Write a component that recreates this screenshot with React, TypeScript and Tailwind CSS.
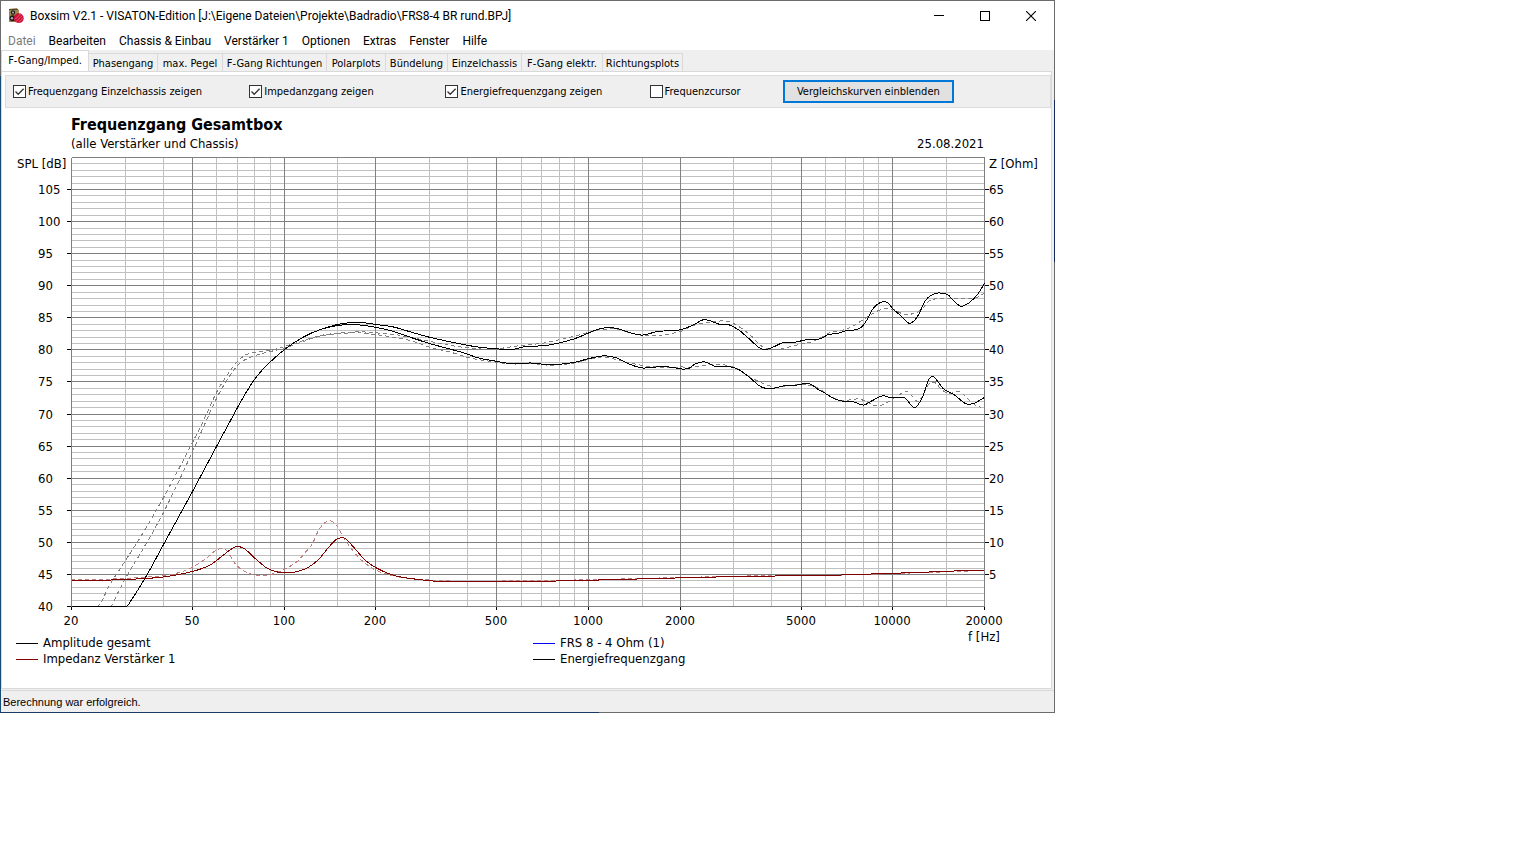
import { useState } from "react";

type Point = [number, number];

const TABS = [
  { label: "F-Gang/Imped.", width: "w-[88px]" },
  { label: "Phasengang", width: "w-[69px]" },
  { label: "max. Pegel", width: "w-[65px]" },
  { label: "F-Gang Richtungen", width: "w-[104px]" },
  { label: "Polarplots", width: "w-[59px]" },
  { label: "Bündelung", width: "w-[62px]" },
  { label: "Einzelchassis", width: "w-[74px]" },
  { label: "F-Gang elektr.", width: "w-[81px]" },
  { label: "Richtungsplots", width: "w-[80px]" },
];

const MENU = ["Datei", "Bearbeiten", "Chassis & Einbau", "Verstärker 1", "Optionen", "Extras", "Fenster", "Hilfe"];

// Plot area in drawing units
const LEFT = 71;
const RIGHT = 984;
const TOP = 157;
const BOTTOM = 606;

const xOf = (hz: number) => Math.round(LEFT + (Math.log10(hz / 20) / 3) * (RIGHT - LEFT));
const yOf = (db: number) => Math.ceil(BOTTOM - 0.5 - ((db - 40) / 70) * (BOTTOM - TOP));

const MINOR_HZ = [
  30, 40, 60, 70, 80, 90, 150, 300, 400, 600, 700, 800, 900, 1500, 3000, 4000, 6000, 7000, 8000, 9000, 15000,
];
const MAJOR_HZ = [20, 50, 100, 200, 500, 1000, 2000, 5000, 10000, 20000];
const ROWS = Array.from({ length: 71 }, (_, i) => 40 + i);
const MAJOR_DB = Array.from({ length: 14 }, (_, i) => 40 + i * 5);

const RISE: Point[] = [
  [71, 606], [126, 606], [128, 604], [145, 577], [163, 544], [192, 491], [216, 446], [237, 407], [245, 393],
  [254, 379], [265, 366], [284, 349], [302, 337], [320, 329],
];

const TOTAL: Point[] = [
  ...RISE,
  [337, 324], [347, 322.5], [365, 322.5], [375, 324], [393, 326.5], [412, 332], [430, 337], [453, 342], [477, 346.5],
  [496, 348.3], [512, 349], [525, 346], [542, 345.3], [555, 343.3], [574, 338.3], [588, 332.5], [600, 328],
  [608, 327.3], [617, 328], [630, 332.3], [642, 334.6], [657, 331], [680, 329.3], [693, 324.3], [702, 319.5],
  [709, 320], [718, 323.5], [729, 324.5], [738, 329.3], [748, 337.7], [760, 348], [768, 348.5], [783, 342],
  [793, 342], [807, 339], [820, 338.3], [828, 334], [837, 333], [847, 329.9], [855, 329.3], [861, 326.5],
  [867, 318.5], [873, 307.5], [880, 302], [887, 302.2], [893, 309], [900, 315], [907, 322], [911, 322.3],
  [917, 316], [925, 300], [932, 294], [938, 292.4], [947, 294], [953, 300], [959, 305.3], [963, 305.3],
  [969, 302], [977, 294], [984, 283],
];

const ENERGY: Point[] = [
  ...RISE,
  [337, 325], [347, 324.2], [357, 324.2], [375, 326.7], [393, 331], [412, 337.5], [430, 343.3], [463, 352.3],
  [478, 357.5], [496, 360.8], [512, 363.2], [530, 362.5], [550, 364.3], [574, 361.8], [588, 358.2], [603, 355.4],
  [615, 357], [630, 364], [642, 367.5], [660, 366.2], [672, 366.8], [680, 368.4], [688, 368], [695, 363.3],
  [704, 361.3], [715, 366], [730, 366.4], [738, 369], [748, 376], [760, 386], [770, 388.3], [783, 385.4],
  [793, 385.2], [802, 383.5], [810, 383.7], [817, 388.5], [823, 391.7], [832, 397.3], [840, 400.3], [852, 401],
  [863, 404.6], [872, 400], [882, 395.3], [890, 397], [904, 397.4], [914, 407], [922, 396.7], [928, 379.5],
  [933, 376.2], [943, 388.3], [953, 393.7], [965, 403], [973, 403], [984, 397],
];

const COMPARE_TOTAL: Point[] = [
  [96, 606], [110, 583], [125, 560], [144, 530], [163, 497], [192, 442], [204, 418], [216, 392], [227, 374],
  [237, 361], [246, 354], [257, 351.5], [273, 349], [284, 346], [297, 342], [320, 335], [340, 332.5], [358, 331.3],
  [375, 332.3], [394, 334], [412, 337.3], [430, 341], [450, 345], [477, 348.3], [496, 348.3], [513, 346],
  [525, 344.5], [542, 342.7], [563, 338.3], [588, 332], [600, 329.2], [617, 328.7], [630, 332.5], [643, 335],
  [657, 335], [680, 331], [693, 325], [705, 322.5], [723, 320.4], [733, 323], [748, 333], [763, 346.7],
  [778, 348.8], [797, 344.3], [810, 341.7], [820, 337.5], [830, 332], [847, 328.3], [863, 319], [877, 310.5],
  [884, 308.5], [893, 309], [900, 312.5], [908, 314], [920, 310], [928, 301], [937, 298], [950, 297.7],
  [963, 298], [977, 296.7], [984, 292.5],
];

const COMPARE_ENERGY: Point[] = [
  [110, 606], [117, 593], [126, 576], [144, 546], [163, 512], [180, 477], [192, 451], [216, 398], [227, 379],
  [237, 365], [247, 358], [262, 353], [284, 347.5], [300, 342], [320, 335.5], [340, 333], [358, 332.4], [375, 334],
  [393, 336.7], [412, 340.7], [430, 347], [453, 352.5], [470, 357.7], [496, 361.7], [512, 363.5], [530, 363],
  [550, 364.7], [574, 362.5], [588, 359], [603, 356.4], [617, 359.5], [630, 362.5], [642, 365], [660, 366.7],
  [680, 366.5], [693, 366.5], [703, 364.8], [723, 364.3], [738, 369], [748, 376], [763, 383], [773, 386.5],
  [783, 386], [801, 384], [815, 386.5], [832, 397], [843, 400], [857, 398.5], [866, 401], [873, 405],
  [883, 404], [893, 398], [901, 393], [907, 391.3], [913, 397], [917, 401], [922, 396], [928, 384],
  [934, 382], [941, 389], [948, 393], [959, 391.3], [967, 398], [974, 404], [981, 407],
];

const IMPEDANCE: Point[] = [
  [71, 580.3], [95, 580], [124, 579], [145, 578], [163, 576.5], [180, 573.7], [197, 569.5], [210, 564.3],
  [223, 554.5], [233, 547.2], [239, 546.2], [245, 549], [255, 558.3], [267, 568], [277, 571.5], [286, 572.3],
  [297, 571], [308, 566.7], [318, 559], [328, 547], [335, 539.5], [340, 537.3], [345, 538.3], [353, 546.5],
  [365, 560], [377, 568], [388, 573], [400, 576.5], [430, 580.3], [447, 581.3], [527, 581], [583, 579.9],
  [667, 577.7], [753, 575.7], [810, 575.2], [848, 574.3], [885, 573], [916, 572], [941, 571], [967, 570],
  [984, 569.5],
];

const COMPARE_IMPEDANCE: Point[] = [
  [71, 579.5], [124, 578], [163, 575], [180, 571.7], [193, 566], [207, 557], [215, 550], [222, 548.3],
  [227, 551], [233, 561], [240, 568.3], [248, 572.7], [258, 574.7], [270, 574], [283, 569.3], [297, 560.7],
  [305, 551.7], [312, 543], [318, 530], [325, 521.8], [330, 520.3], [337, 526], [343, 537], [353, 551],
  [363, 561.5], [375, 569.5], [388, 574], [400, 576.8], [430, 579.6], [450, 580.5], [527, 580.3], [583, 579.3],
  [667, 577.3], [753, 575.4], [848, 574.4], [916, 572.3], [967, 570.6], [984, 570],
];

// Smooth cubic path through all points, never dropping below the axis
function curve(points: Point[]) {
  let d = `M${points[0][0]},${points[0][1]}`;
  for (let i = 0; i < points.length - 1; i++) {
    const p0 = points[Math.max(0, i - 1)];
    const p1 = points[i];
    const p2 = points[i + 1];
    const p3 = points[Math.min(points.length - 1, i + 2)];
    const h = (p2[0] - p1[0]) / 3;
    const m1 = (p2[1] - p0[1]) / (p2[0] - p0[0] || 1);
    const m2 = (p3[1] - p1[1]) / (p3[0] - p1[0] || 1);
    const y1 = i === 0 ? p1[1] : p1[1] + m1 * h;
    const y2 = p2[1] - m2 * h;
    d += `C${(p1[0] + h).toFixed(2)},${Math.min(y1, BOTTOM).toFixed(2)} ${(p2[0] - h).toFixed(2)},${Math.min(y2, BOTTOM).toFixed(2)} ${p2[0]},${p2[1]}`;
  }
  return d;
}

function Chart() {
  return (
    <svg
      viewBox="2 152 1049 482"
      className="block w-full overflow-visible"
      role="img"
      aria-label="Frequenzgang Gesamtbox"
      fontSize="13"
    >
      <g shapeRendering="crispEdges" strokeWidth="1" fill="none">
        <g stroke="#c0c0c0" transform="translate(0.5 0.5)">
          {ROWS.filter((db) => db % 5).map((db) => (
            <line key={db} x1={LEFT} x2={RIGHT} y1={yOf(db)} y2={yOf(db)} />
          ))}
          {MINOR_HZ.map((hz) => (
            <line key={hz} x1={xOf(hz)} x2={xOf(hz)} y1={TOP} y2={BOTTOM} />
          ))}
        </g>
        <g stroke="#808080" transform="translate(0.5 0.5)">
          {MAJOR_DB.map((db) => (
            <line key={db} x1={LEFT} x2={RIGHT} y1={yOf(db)} y2={yOf(db)} />
          ))}
          {MAJOR_HZ.map((hz) => (
            <line key={hz} x1={xOf(hz)} x2={xOf(hz)} y1={TOP} y2={BOTTOM} />
          ))}
          <line x1={LEFT} x2={RIGHT} y1={TOP} y2={TOP} />
        </g>
        <g stroke="#000" transform="translate(0.5 0.5)">
          {MAJOR_DB.map((db) => (
            <line key={db} x1={LEFT - 5} x2={LEFT - 1} y1={yOf(db)} y2={yOf(db)} />
          ))}
          {MAJOR_DB.slice(1).map((db) => (
            <line key={db} x1={RIGHT} x2={RIGHT + 4} y1={yOf(db)} y2={yOf(db)} />
          ))}
          {MAJOR_HZ.map((hz) => (
            <line key={hz} x1={xOf(hz)} x2={xOf(hz)} y1={BOTTOM} y2={BOTTOM + 3} />
          ))}
        </g>
        <g transform="translate(0.5 0.5)">
          <g strokeDasharray="4 3">
            <path d={curve(COMPARE_TOTAL)} stroke="#808080" />
            <path d={curve(COMPARE_ENERGY)} stroke="#808080" />
            <path d={curve(COMPARE_IMPEDANCE)} stroke="#c08080" />
          </g>
          <path d={curve(TOTAL)} stroke="#000" />
          <path d={curve(ENERGY)} stroke="#000" />
          <path d={curve(IMPEDANCE)} stroke="#800000" />
        </g>
      </g>
      <g fill="#000">
        <text x="17" y="168">SPL [dB]</text>
        <text x="989" y="168">Z [Ohm]</text>
        {MAJOR_DB.map((db) => (
          <text key={db} x="38" y={yOf(db) + 5}>{db}</text>
        ))}
        {MAJOR_DB.slice(1).map((db) => (
          <text key={db} x="989" y={yOf(db) + 5}>{db - 40}</text>
        ))}
        {MAJOR_HZ.map((hz) => (
          <text key={hz} x={xOf(hz)} y="625" textAnchor="middle">{hz}</text>
        ))}
        <text x="968" y="641">f [Hz]</text>
      </g>
    </svg>
  );
}

function Check({ label, initial }: { label: string; initial: boolean }) {
  const [on, setOn] = useState(initial);
  return (
    <label className="flex items-center gap-[2px] whitespace-nowrap">
      <span className="relative block size-[13px] shrink-0">
        <input
          type="checkbox"
          checked={on}
          onChange={() => setOn(!on)}
          className="block size-[13px] appearance-none border border-[#333] bg-white"
        />
        {on && (
          <svg viewBox="0 0 13 13" className="pointer-events-none absolute inset-0 size-[13px]" aria-hidden="true">
            <path d="M2.5 6.5 5.2 9.3 10.6 3.8" fill="none" stroke="#333" strokeWidth="1.3" />
          </svg>
        )}
      </span>
      <span className="pt-[2px]">{label}</span>
    </label>
  );
}

function AppIcon() {
  return (
    <svg viewBox="0 0 16 16" className="size-4 shrink-0" aria-hidden="true">
      <path d="M1 1 9 0.5 11 2V13L9.5 14H1Z" fill="#a98d58" />
      <path d="M1 1 9 0.5 10 2H1Z" fill="#5a4526" />
      <rect x="1" y="2" width="8.5" height="12" fill="#a08650" />
      <circle cx="5" cy="4.5" r="2.2" fill="#1c1c1c" />
      <circle cx="5" cy="4.5" r="0.9" fill="#c5c5c5" />
      <circle cx="4.6" cy="10.3" r="3" fill="#1c1c1c" />
      <circle cx="4" cy="10.3" r="1.2" fill="#aaa" />
      <circle cx="10.8" cy="10.2" r="4.9" fill="#d01038" />
      <path d="M7 11.5 12.5 6M8 13.6 14.6 7.4M10.3 14.6 15.4 9.8" stroke="#f08a9c" strokeWidth="0.6" />
    </svg>
  );
}

function LegendItem({ swatch, label }: { swatch: string; label: string }) {
  return (
    <li className="flex h-4 items-center gap-[5px]">
      <span className={`h-px w-[22px] ${swatch}`} />
      {label}
    </li>
  );
}

export default function App() {
  const [tab, setTab] = useState(0);
  return (
    <main
      className="w-full max-w-[1055px] bg-[#6b6b6b] p-px text-black [background-image:linear-gradient(#1a3c64,#1a3c64),linear-gradient(#1a4b73,#1a4b73),linear-gradient(#142a5c,#142a5c)] [background-position:0_100%,0_100%,100%_100px] [background-repeat:no-repeat] [background-size:599px_1px,1px_calc(100%-76px),1px_162px] font-['DejaVu_Sans_Condensed','DejaVu_Sans',sans-serif]"
    >
      <div className="bg-[#efefef] text-[11px]">
        <header className="flex h-[30px] items-center bg-white pb-px pl-[7px] font-['Roboto',sans-serif] text-xs">
          <AppIcon />
          <h1 className="ml-[6px] flex-1 whitespace-nowrap">
            Boxsim V2.1 - VISATON-Edition [J:\Eigene Dateien\Projekte\Badradio\FRS8-4 BR rund.BPJ]
          </h1>
          <button aria-label="Minimieren" className="flex h-full w-[46px] items-center justify-center">
            <span className="h-px w-[10px] bg-black" />
          </button>
          <button aria-label="Maximieren" className="flex h-full w-[46px] items-center justify-center">
            <span className="size-[10px] border border-black" />
          </button>
          <button aria-label="Schließen" className="flex h-full w-[46px] items-center justify-center">
            <svg viewBox="0 0 10 10" className="size-[10px]" aria-hidden="true">
              <path d="M0 0 10 10M10 0 0 10" stroke="#000" strokeWidth="1.1" />
            </svg>
          </button>
        </header>

        <nav className="flex h-[19px] items-center gap-[13px] bg-white pl-[7px] font-['Roboto',sans-serif] text-xs">
          {MENU.map((item, i) => (
            <button key={item} disabled={i === 0} className="whitespace-nowrap disabled:text-[#7a7a7a]">
              {item}
            </button>
          ))}
        </nav>

        <div role="tablist" className="flex h-[21px] items-end">
          {TABS.map((t, i) => (
            <button
              key={t.label}
              role="tab"
              aria-selected={i === tab}
              onClick={() => setTab(i)}
              className={`${t.width} whitespace-nowrap border-t border-r border-[#d9d9d9] text-center ${
                i === tab ? "h-[21px] border-l bg-white" : "h-[18px] bg-[#f0f0f0] pt-[2px]"
              }`}
            >
              {t.label}
            </button>
          ))}
        </div>

        <div className="pr-[2px]">
          <section className="border border-[#d9d9d9] bg-white">
            <div className="mt-[3px] ml-[3px] grid h-[33px] grid-cols-[236fr_196fr_204fr_133fr_171fr_96fr] items-center border border-[#dcdcdc] bg-[#efefef] pl-[7px]">
              <Check label="Frequenzgang Einzelchassis zeigen" initial />
              <Check label="Impedanzgang zeigen" initial />
              <Check label="Energiefrequenzgang zeigen" initial />
              <Check label="Frequenzcursor" initial={false} />
              <button className="h-[23px] whitespace-nowrap border-2 border-[#0078d7] bg-[#e1e1e1] pt-[2px]">
                Vergleichskurven einblenden
              </button>
            </div>

            <div className="pt-[7px] text-[13px]">
              <h2 className="ml-[69px] text-base leading-5 font-bold">Frequenzgang Gesamtbox</h2>
              <div className="flex h-[17px] justify-between pr-[67px] pl-[69px] leading-[18px]">
                <p>(alle Verstärker und Chassis)</p>
                <time dateTime="2021-08-25">25.08.2021</time>
              </div>
              <Chart />
              <ul className="grid grid-cols-[517fr_518fr] pt-px pb-[21px] pl-[14px]">
                <LegendItem swatch="bg-black" label="Amplitude gesamt" />
                <LegendItem swatch="bg-[#0000ff]" label="FRS 8 - 4 Ohm (1)" />
                <LegendItem swatch="bg-[#800000]" label="Impedanz Verstärker 1" />
                <LegendItem swatch="bg-black" label="Energiefrequenzgang" />
              </ul>
            </div>
          </section>
        </div>

        <footer className="mt-px flex h-[22px] items-center border-t border-[#d9d9d9] pt-px pl-[2px] font-['Liberation_Sans',Arial,sans-serif]">
          Berechnung war erfolgreich.
        </footer>
      </div>
    </main>
  );
}
